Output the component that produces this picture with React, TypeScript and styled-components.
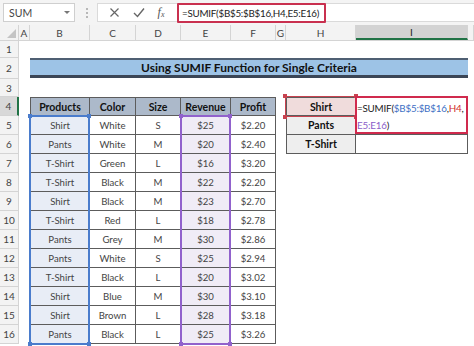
import React from 'react'
import styled, { createGlobalStyle, css } from 'styled-components'

const GlobalStyle = createGlobalStyle`
  html, body {
    margin: 0;
    padding: 0;
    background: #ffffff;
  }
  body {
    font-family: Lato, 'Liberation Sans', sans-serif;
    color: #333;
    width: 474px;
    height: 346px;
    overflow: hidden;
  }
`

const COLS = '19px 11px 60px 46px 45px 50px 45px 10px 70px 112px 1fr'

const Window = styled.div`
  display: flex;
  flex-direction: column;
  width: 474px;
  height: 346px;
  overflow: hidden;
`

const FormulaBar = styled.div`
  display: flex;
  align-items: center;
  height: 25px;
  padding: 0 0 0 3px;
  background: #f4f4f4;
  box-sizing: border-box;
`

const NameBox = styled.div`
  display: flex;
  align-items: center;
  justify-content: space-between;
  width: 72px;
  height: 19px;
  box-sizing: border-box;
  padding: 0 4px 0 5px;
  background: #fff;
  border: 1px solid #cfcfcf;
  font-size: 10.5px;
  color: #444;
`

const Caret = styled.span`
  width: 0;
  height: 0;
  border-left: 3px solid transparent;
  border-right: 3px solid transparent;
  border-top: 3px solid #777;
`

const Grip = styled.div`
  display: flex;
  flex-direction: column;
  gap: 2px;
  margin: 0 9px 0 11px;
  span {
    width: 2px;
    height: 2px;
    background: #b8b8b8;
  }
`

const ButtonBox = styled.div`
  display: flex;
  align-items: center;
  justify-content: space-around;
  width: 78px;
  height: 19px;
  box-sizing: border-box;
  background: #fff;
  border: 1px solid #dadada;
  border-right: none;
  padding: 0 4px;
`

const FxText = styled.span`
  font-family: 'Liberation Serif', serif;
  font-style: italic;
  font-size: 12px;
  color: #555;
  sub {
    font-size: 8px;
    vertical-align: baseline;
    position: relative;
    top: 1px;
  }
`

const FormulaField = styled.div`
  flex: 1;
  display: flex;
  align-items: center;
  height: 19px;
  box-sizing: border-box;
  background: #fff;
  border-top: 1px solid #dadada;
  border-bottom: 1px solid #dadada;
  padding-left: 2px;
`

const FormulaHighlight = styled.div`
  width: 149px;
  height: 20px;
  box-sizing: border-box;
  border: 2px solid #c9304f;
  border-radius: 1px;
  padding: 0 0 0 3px;
  font-size: 9.8px;
  line-height: 16px;
  color: #222;
  white-space: nowrap;
  letter-spacing: -0.25px;
`

const ColumnHeaders = styled.div`
  display: grid;
  grid-template-columns: ${COLS};
  height: 16px;
  background: #f3f3f3;
  border-bottom: 1px solid #d4d4d4;
  box-sizing: border-box;
`

const ColHead = styled.div<{ $active?: boolean }>`
  display: flex;
  align-items: center;
  justify-content: center;
  font-size: 10px;
  color: #444;
  border-right: 1px solid #d4d4d4;
  box-sizing: border-box;
  ${(p) =>
    p.$active &&
    css`
      background: #d3d3d3;
      border-bottom: 2px solid #217346;
      color: #222;
    `}
`

const Corner = styled.div`
  position: relative;
  border-right: 1px solid #d4d4d4;
  &::after {
    content: '';
    position: absolute;
    right: 2px;
    bottom: 2px;
    width: 0;
    height: 0;
    border-left: 9px solid transparent;
    border-bottom: 9px solid #c4c4c4;
  }
`

const Sheet = styled.div`
  display: grid;
  grid-template-columns: ${COLS};
  grid-template-rows: 17px 21px 18px repeat(13, 19px);
`

const RowHead = styled.div<{ $row: number; $active?: boolean }>`
  grid-column: 1;
  grid-row: ${(p) => p.$row};
  display: flex;
  align-items: center;
  justify-content: center;
  font-size: 10px;
  color: #444;
  background: ${(p) => (p.$active ? '#d8d8d8' : '#f3f3f3')};
  border-bottom: 1px solid #d4d4d4;
  border-right: ${(p) => (p.$active ? '2px solid #217346' : '1px solid #d4d4d4')};
  box-sizing: border-box;
`

const TitleBar = styled.div`
  grid-column: 3 / 11;
  grid-row: 2;
  display: flex;
  align-items: center;
  justify-content: center;
  background: #9dc3e6;
  border-top: 2px solid #4f5f73;
  border-bottom: 3px solid #3b4656;
  margin-bottom: 1px;
  font-size: 12px;
  font-weight: 700;
  color: #111;
`

const Cell = styled.div<{
  $col: number
  $row: number
  $fill?: string
  $bold?: boolean
  $left?: boolean
  $top?: boolean
}>`
  grid-column: ${(p) => p.$col};
  grid-row: ${(p) => p.$row};
  display: flex;
  align-items: center;
  justify-content: center;
  background: ${(p) => p.$fill || '#fff'};
  border-right: 1px solid #5c5c5c;
  border-bottom: 1px solid #5c5c5c;
  border-left: ${(p) => (p.$left ? '1px solid #5c5c5c' : 'none')};
  border-top: ${(p) => (p.$top ? '1px solid #5c5c5c' : 'none')};
  box-sizing: border-box;
  font-size: ${(p) => (p.$bold ? '10.5px' : '9.6px')};
  font-weight: ${(p) => (p.$bold ? 700 : 400)};
  color: ${(p) => (p.$bold ? '#111' : '#444')};
`

const RefBox = styled.div<{ $col: number; $rows: string; $color: string; $width?: number }>`
  grid-column: ${(p) => p.$col};
  grid-row: ${(p) => p.$rows};
  position: relative;
  z-index: 2;
  border: ${(p) => p.$width || 2}px solid ${(p) => p.$color};
  margin: -1px 0 -1px -1px;
  pointer-events: none;
  span {
    position: absolute;
    width: 4px;
    height: 4px;
    background: ${(p) => p.$color};
  }
  span:nth-child(1) { left: -3px; top: -3px; }
  span:nth-child(2) { right: -3px; top: -3px; }
  span:nth-child(3) { left: -3px; bottom: -3px; }
  span:nth-child(4) { right: -3px; bottom: -3px; }
`

const EditBox = styled.div`
  grid-column: 10;
  grid-row: 4 / 6;
  z-index: 3;
  margin: -1px 0 1px -1px;
  background: #fff;
  border: 2px solid #d02a4d;
  padding: 2px 0 0 0;
  font-size: 9.8px;
  line-height: 17px;
  color: #222;
  letter-spacing: -0.2px;
`

const Ref = styled.span<{ $c: string }>`
  color: ${(p) => p.$c};
`

const rows: [string, string, string, string, string][] = [
  ['Shirt', 'White', 'S', '$25', '$2.20'],
  ['Pants', 'White', 'M', '$20', '$2.40'],
  ['T-Shirt', 'Green', 'L', '$16', '$3.20'],
  ['T-Shirt', 'Black', 'M', '$22', '$2.20'],
  ['Shirt', 'Black', 'M', '$23', '$2.70'],
  ['T-Shirt', 'Red', 'L', '$18', '$2.78'],
  ['Pants', 'Grey', 'M', '$30', '$2.86'],
  ['Pants', 'White', 'S', '$25', '$2.94'],
  ['T-Shirt', 'Black', 'L', '$20', '$3.02'],
  ['Shirt', 'Blue', 'M', '$30', '$3.10'],
  ['Shirt', 'Brown', 'L', '$28', '$3.18'],
  ['Pants', 'Black', 'L', '$25', '$3.26'],
]

const headers = ['Products', 'Color', 'Size', 'Revenue', 'Profit']
const columnFill = ['#e8edf6', undefined, undefined, '#f0ecf6', undefined]
const letters = ['A', 'B', 'C', 'D', 'E', 'F', 'G', 'H', 'I', '']

export default function App() {
  return (
    <Window>
      <GlobalStyle />
      <FormulaBar>
        <NameBox>
          SUM
          <Caret />
        </NameBox>
        <Grip>
          <span />
          <span />
          <span />
        </Grip>
        <ButtonBox>
          <svg width="11" height="11" viewBox="0 0 11 11">
            <path d="M1.5 1.5 L9.5 9.5 M9.5 1.5 L1.5 9.5" stroke="#666" strokeWidth="1.2" fill="none" />
          </svg>
          <svg width="12" height="11" viewBox="0 0 12 11">
            <path d="M1 6 L4.5 9.5 L11 1.5" stroke="#666" strokeWidth="1.4" fill="none" />
          </svg>
          <FxText>
            f<sub>x</sub>
          </FxText>
        </ButtonBox>
        <FormulaField>
          <FormulaHighlight>=SUMIF($B$5:$B$16,H4,E5:E16)</FormulaHighlight>
        </FormulaField>
      </FormulaBar>

      <ColumnHeaders>
        <Corner />
        {letters.map((l, i) => (
          <ColHead key={i} $active={l === 'I'}>
            {l}
          </ColHead>
        ))}
      </ColumnHeaders>

      <Sheet>
        {Array.from({ length: 16 }, (_, i) => (
          <RowHead key={i} $row={i + 1} $active={i + 1 === 4}>
            {i + 1}
          </RowHead>
        ))}

        <TitleBar>Using SUMIF Function for Single Criteria</TitleBar>

        {headers.map((h, c) => (
          <Cell key={h} $col={c + 3} $row={4} $fill="#acb9ca" $bold $top $left={c === 0}>
            {h}
          </Cell>
        ))}
        {rows.map((r, ri) =>
          r.map((v, c) => (
            <Cell key={`${ri}-${c}`} $col={c + 3} $row={ri + 5} $fill={columnFill[c]} $left={c === 0}>
              {v}
            </Cell>
          ))
        )}

        <Cell $col={9} $row={4} $fill="#f0dcdc" $bold $top $left>
          Shirt
        </Cell>
        <Cell $col={9} $row={5} $fill="#eeeeee" $bold $left>
          Pants
        </Cell>
        <Cell $col={9} $row={6} $fill="#eeeeee" $bold $left>
          T-Shirt
        </Cell>
        <Cell $col={10} $row={4} $top />
        <Cell $col={10} $row={5} />
        <Cell $col={10} $row={6} />

        <RefBox $col={3} $rows="5 / 17" $color="#4a7ccc">
          <span />
          <span />
          <span />
          <span />
        </RefBox>
        <RefBox $col={6} $rows="5 / 17" $color="#9162cc">
          <span />
          <span />
          <span />
          <span />
        </RefBox>
        <RefBox $col={9} $rows="4" $color="#c8424f" $width={1}>
          <span />
          <span />
          <span />
          <span />
        </RefBox>

        <EditBox>
          =SUMIF(<Ref $c="#3d6fc4">$B$5:$B$16</Ref>,<Ref $c="#d02b2b">H4</Ref>,
          <br />
          <Ref $c="#8a5cc8">E5:E16</Ref>)
        </EditBox>
      </Sheet>
    </Window>
  )
}
